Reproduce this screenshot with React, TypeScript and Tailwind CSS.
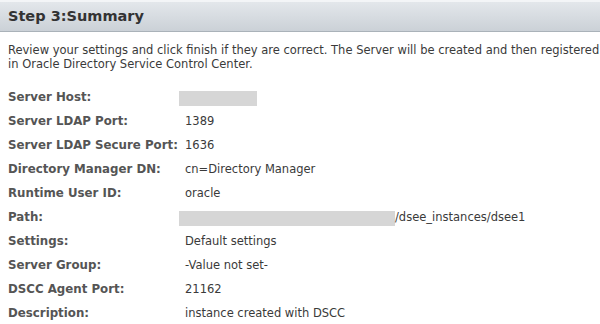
import React from 'react';

type Row = { label: string; value?: string; redact?: number; suffix?: string };

const rows: Row[] = [
  { label: 'Server Host:', redact: 78 },
  { label: 'Server LDAP Port:', value: '1389' },
  { label: 'Server LDAP Secure Port:', value: '1636' },
  { label: 'Directory Manager DN:', value: 'cn=Directory Manager' },
  { label: 'Runtime User ID:', value: 'oracle' },
  { label: 'Path:', redact: 216, suffix: '/dsee_instances/dsee1' },
  { label: 'Settings:', value: 'Default settings' },
  { label: 'Server Group:', value: '-Value not set-' },
  { label: 'DSCC Agent Port:', value: '21162' },
  { label: 'Description:', value: 'instance created with DSCC' },
];

export default function App() {
  return (
    <div className="w-[600px] h-[324px] overflow-hidden bg-white font-['DejaVu_Sans',sans-serif]">
      <div className="h-[32px] border-t-2 border-t-[#f3f5f7] border-b border-b-[#aab2b9] bg-gradient-to-b from-[#e3e7eb] to-[#cbd1d7] flex items-center px-2">
        <h1 className="text-[14.5px] font-bold text-[#333] leading-none">Step 3:Summary</h1>
      </div>

      <p className="pl-2 pt-[11px] text-[11.5px] leading-[14px] text-[#3a3a3a] whitespace-nowrap">
        Review your settings and click finish if they are correct. The Server will be created and then registered
        <br />
        in Oracle Directory Service Control Center.
      </p>

      <div className="mt-[15px] flex flex-col">
        {rows.map((r) => (
          <div key={r.label} className="flex items-center h-[24px] px-2">
            <div className="w-[171px] shrink-0 text-[11.8px] font-bold text-[#555] whitespace-nowrap">{r.label}</div>
            {r.redact ? (
              <div className="flex items-center">
                <div className="h-[15px] bg-[#d6d6d6]" style={{ width: r.redact }} />
                {r.suffix && <span className="text-[11.5px] text-[#3a3a3a]">{r.suffix}</span>}
              </div>
            ) : (
              <div className="pl-[6px] text-[11.5px] text-[#3a3a3a]">{r.value}</div>
            )}
          </div>
        ))}
      </div>
    </div>
  );
}
